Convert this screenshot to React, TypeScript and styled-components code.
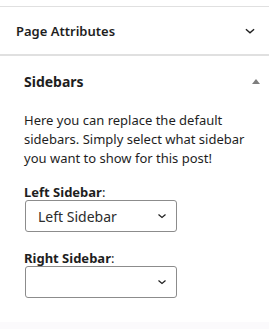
import React from 'react';
import styled, { createGlobalStyle } from 'styled-components';

const GlobalStyle = createGlobalStyle`
  html, body {
    margin: 0;
    padding: 0;
    background: #fff;
  }
  body {
    font-family: 'Noto Sans', 'Open Sans', sans-serif;
    color: #1e1e1e;
  }
`;

const Sidebar = styled.div`
  width: 269px;
  height: 329px;
  display: flex;
  flex-direction: column;
  background: #fff;
`;

const TopEdge = styled.div`
  height: 6px;
  border-bottom: 1px solid #e0e0e0;
`;

const PanelHeader = styled.div`
  height: 47px;
  padding: 0 12px 0 16px;
  display: flex;
  align-items: center;
  justify-content: space-between;
  border-bottom: 2px solid #e0e0e0;
  font-size: 13px;
  font-weight: 600;
`;

const MetaBox = styled.div`
  flex: 1;
  padding: 14px 8px 0 24px;
  display: flex;
  flex-direction: column;
`;

const MetaHeader = styled.div`
  display: flex;
  align-items: center;
  justify-content: space-between;
  height: 22px;
  font-size: 14px;
  font-weight: 700;
`;

const Triangle = styled.span`
  width: 0;
  height: 0;
  border-left: 4px solid transparent;
  border-right: 4px solid transparent;
  border-bottom: 5px solid #7e7e7e;
  margin-right: 1px;
`;

const Intro = styled.p`
  margin: 19px 0 0;
  font-size: 13px;
  line-height: 19px;
  color: #1e1e1e;
`;

const Field = styled.div<{ $top: number }>`
  margin-top: ${(p) => p.$top}px;
  display: flex;
  flex-direction: column;
`;

const Label = styled.label`
  font-size: 13px;
  line-height: 16px;
  font-weight: 700;
  margin-bottom: 0;

  span {
    font-weight: 400;
  }
`;

const Select = styled.div`
  width: 152px;
  height: 32px;
  box-sizing: border-box;
  margin-left: 1px;
  border: 1px solid #8c8c8c;
  border-radius: 3px;
  padding: 0 8px 0 12px;
  display: flex;
  align-items: center;
  justify-content: space-between;
  font-size: 14px;
  color: #2c2c2c;
`;

const Footer = styled.div`
  height: 7px;
  background: #fbfafc;
`;

const Chevron = ({ size = 12 }: { size?: number }) => (
  <svg width={size} height={size} viewBox="0 0 24 24" fill="none">
    <path d="M5 9l7 6 7-6" stroke="#1e1e1e" strokeWidth="2.4" />
  </svg>
);

export default function App() {
  return (
    <>
      <GlobalStyle />
      <Sidebar>
        <TopEdge />
        <PanelHeader>
          Page Attributes
          <Chevron size={14} />
        </PanelHeader>
        <MetaBox>
          <MetaHeader>
            Sidebars
            <Triangle />
          </MetaHeader>
          <Intro>
            Here you can replace the default sidebars. Simply select what sidebar you want to show
            for this post!
          </Intro>
          <Field $top={16}>
            <Label>
              Left Sidebar<span>:</span>
            </Label>
            <Select>
              Left Sidebar
              <Chevron />
            </Select>
          </Field>
          <Field $top={18}>
            <Label>
              Right Sidebar<span>:</span>
            </Label>
            <Select>
              <span />
              <Chevron />
            </Select>
          </Field>
        </MetaBox>
        <Footer />
      </Sidebar>
    </>
  );
}
